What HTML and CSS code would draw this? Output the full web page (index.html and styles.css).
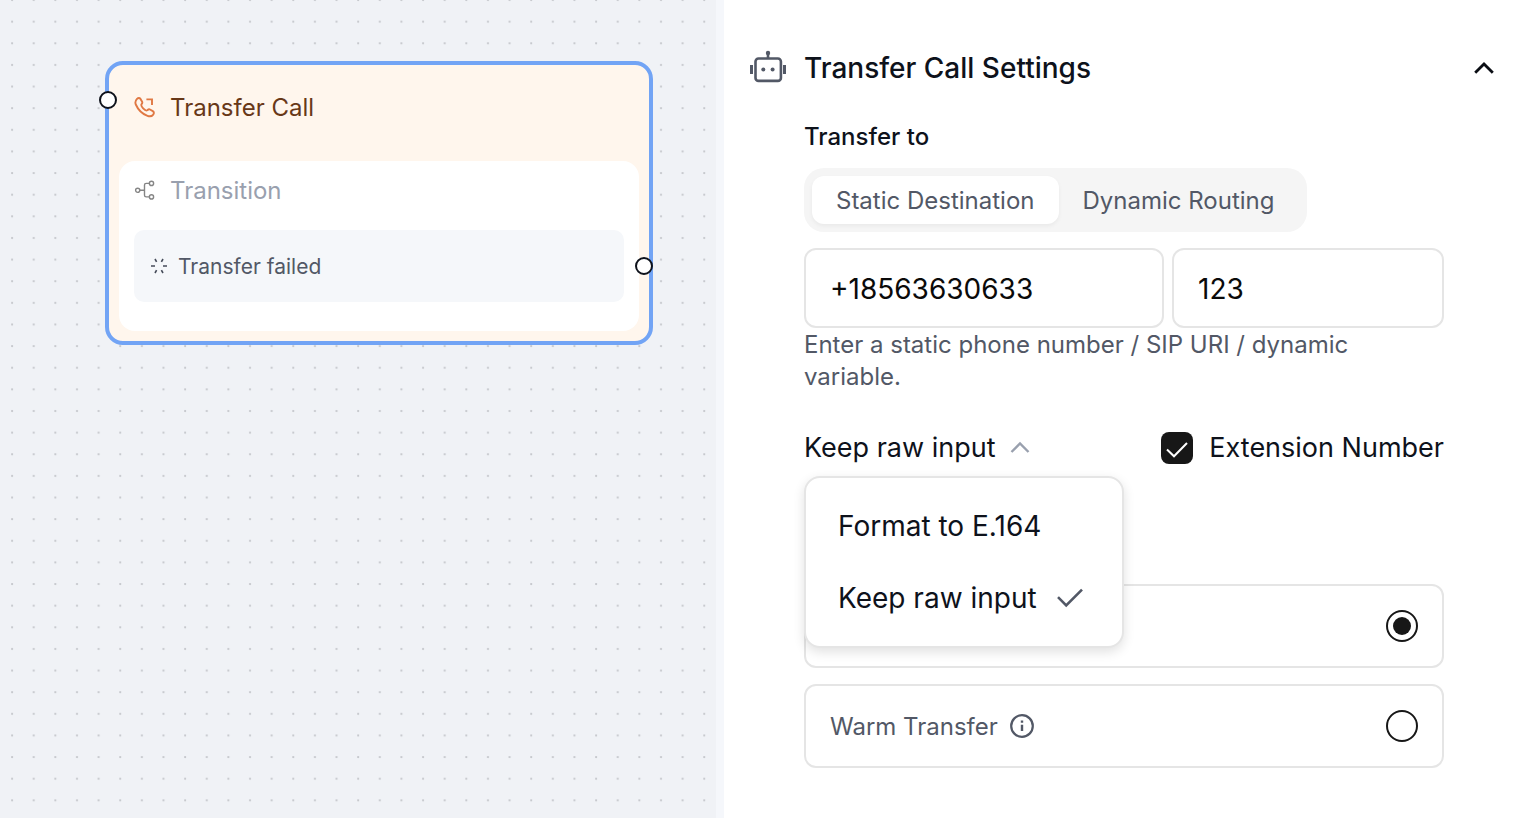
FILE: index.html
```
<!DOCTYPE html>
<html lang="en">
<head>
	<meta charset="UTF-8">
	<title>Transfer Call Settings</title>
	<meta name="viewport" content="width=device-width,initial-scale=1">
	<link rel="stylesheet" href="styles.css">
</head>
<body>
	<div class="editor">
		<main class="canvas">
			<svg class="canvas-dots" aria-hidden="true">
				<pattern id="dots" x="11" y="-1" width="21.63" height="21.63" patternUnits="userSpaceOnUse">
					<circle cx="1.1" cy="1.1" r="1.1" fill="#c3c5ca"/>
				</pattern>
				<rect width="100%" height="100%" fill="url(#dots)"/>
			</svg>
			<section class="node">
				<span class="handle handle-in"></span>
				<header class="node-header">
					<svg width="22" height="22" viewBox="0 0 22 22" fill="none" stroke="#e07843" stroke-width="1.9" stroke-linejoin="round">
						<path d="M3 2.9C4.2 1.7 5.6 1.7 6.5 2.9L8 5.4C8.6 6.5 8.4 7.3 7.6 8.2C6.2 10 11.2 15.7 13.3 14.3C14.3 13.4 15 13 16 13.5L18.8 15.1C20.2 16 20.2 17.5 19 18.8C17.8 20.3 16 20.7 13.5 19.8C8.5 18 4 13.5 1.8 8.5C.8 6.1 1.6 4.4 3 2.9Z"/>
						<path stroke-linejoin="miter" d="M12.4 3.4H18V9"/>
					</svg>
					<h2>Transfer Call</h2>
				</header>
				<div class="node-body">
					<div class="node-label">
						<svg width="22" height="22" viewBox="0 0 22 22" fill="none" stroke="#858585" stroke-width="1.4">
							<circle cx="3.7" cy="11.3" r="2.1"/>
							<circle cx="17.5" cy="4.4" r="2.1"/>
							<circle cx="17.5" cy="17.9" r="2.1"/>
							<path d="M5.8 11.3h4.7M15.4 4.4h-3.2q-1.7 0-1.7 1.7v10.1q0 1.7 1.7 1.7h3.2"/>
						</svg>
						<span>Transition</span>
					</div>
					<div class="node-edge">
						<svg width="18" height="18" viewBox="0 0 18 18" fill="none" stroke="#454b59" stroke-width="1.6">
							<path d="M1 9h4M13 9h4M5 2l1.6 2.9M13 2l-1.6 2.9M5 16l1.6-2.9M13 16l-1.6-2.9"/>
						</svg>
						<span>Transfer failed</span>
					</div>
				</div>
				<span class="handle handle-out"></span>
			</section>
		</main>
		<div class="divider"></div>
		<aside class="panel">
			<header class="panel-header">
				<svg width="36" height="36" viewBox="0 0 36 36" fill="none" stroke="#525866" stroke-width="2.6">
					<rect x="5.5" y="8.5" width="25.4" height="22.4" rx="3"/>
					<path d="M18 3v6"/>
					<path stroke-width="3" d="M1.5 15v9M34.5 15v9"/>
					<g fill="#525866" stroke="none">
						<circle cx="18" cy="3" r="2.2"/>
						<circle cx="13.3" cy="19.5" r="2"/>
						<circle cx="22.6" cy="19.5" r="2"/>
					</g>
				</svg>
				<h1>Transfer Call Settings</h1>
				<button type="button" class="icon-btn" aria-label="Collapse">
					<svg width="20" height="20" viewBox="0 0 20 20" fill="none" stroke="#0a0d14" stroke-width="2.8">
						<path d="M1.2 14.8L10 6l8.8 8.8"/>
					</svg>
				</button>
			</header>
			<form class="settings">
				<h3>Transfer to</h3>
				<div class="segmented">
					<button type="button" class="active">Static Destination</button>
					<button type="button">Dynamic Routing</button>
				</div>
				<div class="inputs">
					<input type="text" aria-label="Phone number" value="+18563630633">
					<input type="text" aria-label="Extension" value="123">
				</div>
				<p class="hint">Enter a static phone number / SIP URI / dynamic variable.</p>
				<div class="options">
					<div class="dropdown">
						<button type="button" class="dropdown-btn" aria-haspopup="listbox" aria-expanded="true">
							Keep raw input
							<svg width="20" height="20" viewBox="0 0 20 20" fill="none" stroke="#99a0ae" stroke-width="2.4">
								<path d="M1.5 14L10 5.5l8.5 8.5"/>
							</svg>
						</button>
						<div class="menu" role="listbox">
							<button type="button" role="option" aria-selected="false">Format to E.164</button>
							<button type="button" role="option" aria-selected="true">
								Keep raw input
								<svg width="26" height="20" viewBox="0 0 26 20" fill="none" stroke="#525866" stroke-width="2.6">
									<path d="M1 9.2l8.2 8.1L25 1.6"/>
								</svg>
							</button>
						</div>
					</div>
					<label class="check">
						<input type="checkbox" checked>
						Extension Number
					</label>
				</div>
				<div class="types">
					<label class="type-card">
						<input type="radio" name="type" aria-label="Cold Transfer" checked>
					</label>
					<label class="type-card">
						<span>Warm Transfer</span>
						<svg width="24" height="24" viewBox="0 0 24 24" fill="none" stroke="#525866" stroke-width="2.2">
							<circle cx="12" cy="12" r="10.8"/>
							<path stroke-width="2.4" d="M12 10.8v6.2M12 6.4v2.4"/>
						</svg>
						<input type="radio" name="type">
					</label>
				</div>
			</form>
		</aside>
	</div>
</body>
</html>
```
FILE: styles.css
```
*{
	box-sizing:border-box;
	margin:0;
	padding:0;
}
body{
	font-family:Inter, "Liberation Sans", sans-serif;
	font-size:28px;
	color:#0e121b;
	background-color:#fff;
}
button,input{
	font:inherit;
	color:inherit;
	border:none;
	background:none;
}
svg{
	display:block;
	flex:none;
}
.editor{
	display:grid;
	grid-template-columns:minmax(0,716fr) 8px minmax(0,798fr);
	min-height:100vh;
}
.divider{
	background-color:#f5f7fb;
}

/* canvas */
.canvas{
	position:relative;
	overflow:hidden;
	background-color:#f0f2f6;
}
.canvas-dots{
	position:absolute;
	left:0;
	top:0;
	width:100%;
	height:100%;
}
.node{
	position:absolute;
	left:105px;
	top:61px;
	width:548px;
	padding:0 10px 10px;
	border:4px solid #72a4f5;
	border-radius:18px;
	background-color:#fff6ed;
}
.node-header,.node-label,.node-edge{
	display:flex;
	align-items:center;
}
.node-header{
	gap:14px;
	height:96px;
	padding:0 15px 12px;
}
.node-header h2{
	font-size:24px;
	font-weight:400;
	color:#683818;
}
.node-body{
	padding:12px 15px 29px;
	border-radius:16px;
	background-color:#fff;
}
.node-label{
	gap:14px;
	height:34px;
	font-size:24px;
	color:#99a0ae;
}
.node-edge{
	gap:10px;
	height:72px;
	margin-top:23px;
	padding:0 16px;
	border-radius:10px;
	background-color:#f5f7fa;
	font-size:21px;
	color:#525866;
}
.handle{
	position:absolute;
	width:18px;
	height:18px;
	border:2px solid #0e121b;
	border-radius:50%;
	background-color:#fff;
}
.handle-in{
	left:-10px;
	top:26px;
}
.handle-out{
	right:-4px;
	top:192px;
}

/* settings */
.panel{
	padding:48px 26px;
}
.panel-header{
	display:flex;
	align-items:center;
	gap:18px;
	height:40px;
}
.panel-header h1{
	flex:1;
	font-size:28px;
	font-weight:500;
}
.icon-btn{
	padding-right:2px;
	cursor:pointer;
}
.settings{
	margin:32px 52px 0 54px;
}
.settings h3{
	font-size:24px;
	font-weight:500;
	line-height:34px;
}
.segmented{
	display:inline-flex;
	margin:14px 0 16px;
	padding:8px;
	border-radius:20px;
	background-color:#f5f5f5;
	vertical-align:top;
}
.segmented button{
	height:48px;
	padding:0 24px;
	border-radius:12px;
	font-size:24px;
	color:#525866;
}
.segmented .active{
	background-color:#fff;
	box-shadow:0 2px 4px rgba(0,0,0,0.05);
}
.inputs{
	display:grid;
	grid-template-columns:minmax(0,360fr) minmax(0,272fr);
	gap:8px;
}
.inputs input{
	height:80px;
	padding:2px 24px 0;
	border:2px solid #e5e5e5;
	border-radius:12px;
	color:#0a0a0a;
}
.hint{
	padding-top:1px;
	font-size:24px;
	line-height:32px;
	color:#525866;
}
.options{
	display:flex;
	justify-content:space-between;
	margin-top:39px;
	font-size:27px;
	line-height:32px;
}
.dropdown{
	position:relative;
}
.dropdown-btn{
	display:flex;
	align-items:center;
	gap:14px;
}
.menu{
	position:absolute;
	left:0;
	top:44px;
	z-index:1;
	width:320px;
	padding:12px 0;
	border:2px solid #e5e5e5;
	border-radius:16px;
	background-color:#fff;
	box-shadow:0 4px 12px rgba(0,0,0,0.12);
	font-size:28px;
}
.menu button{
	display:flex;
	align-items:center;
	gap:20px;
	width:100%;
	height:72px;
	padding:0 32px;
	white-space:nowrap;
}
.check{
	display:flex;
	align-items:center;
	gap:16px;
}
.check input{
	width:32px;
	height:32px;
	appearance:none;
	border-radius:8px;
	background:#171717 url("data:image/svg+xml,%3Csvg xmlns='http://www.w3.org/2000/svg' viewBox='0 0 32 32' fill='none' stroke='%23fff' stroke-width='2'%3E%3Cpath d='M6 17.5l7 6.8L26 11'/%3E%3C/svg%3E");
}
.types{
	display:grid;
	gap:16px;
	margin-top:120px;
}
.type-card{
	display:flex;
	align-items:center;
	gap:12px;
	height:84px;
	padding:0 24px;
	border:2px solid #e5e5e5;
	border-radius:12px;
	font-size:24px;
	color:#525866;
}
.type-card input{
	width:32px;
	height:32px;
	margin-left:auto;
	appearance:none;
	border:2px solid #171717;
	border-radius:50%;
}
.type-card input:checked{
	padding:5px;
	background-color:#171717;
	background-clip:content-box;
}
```
